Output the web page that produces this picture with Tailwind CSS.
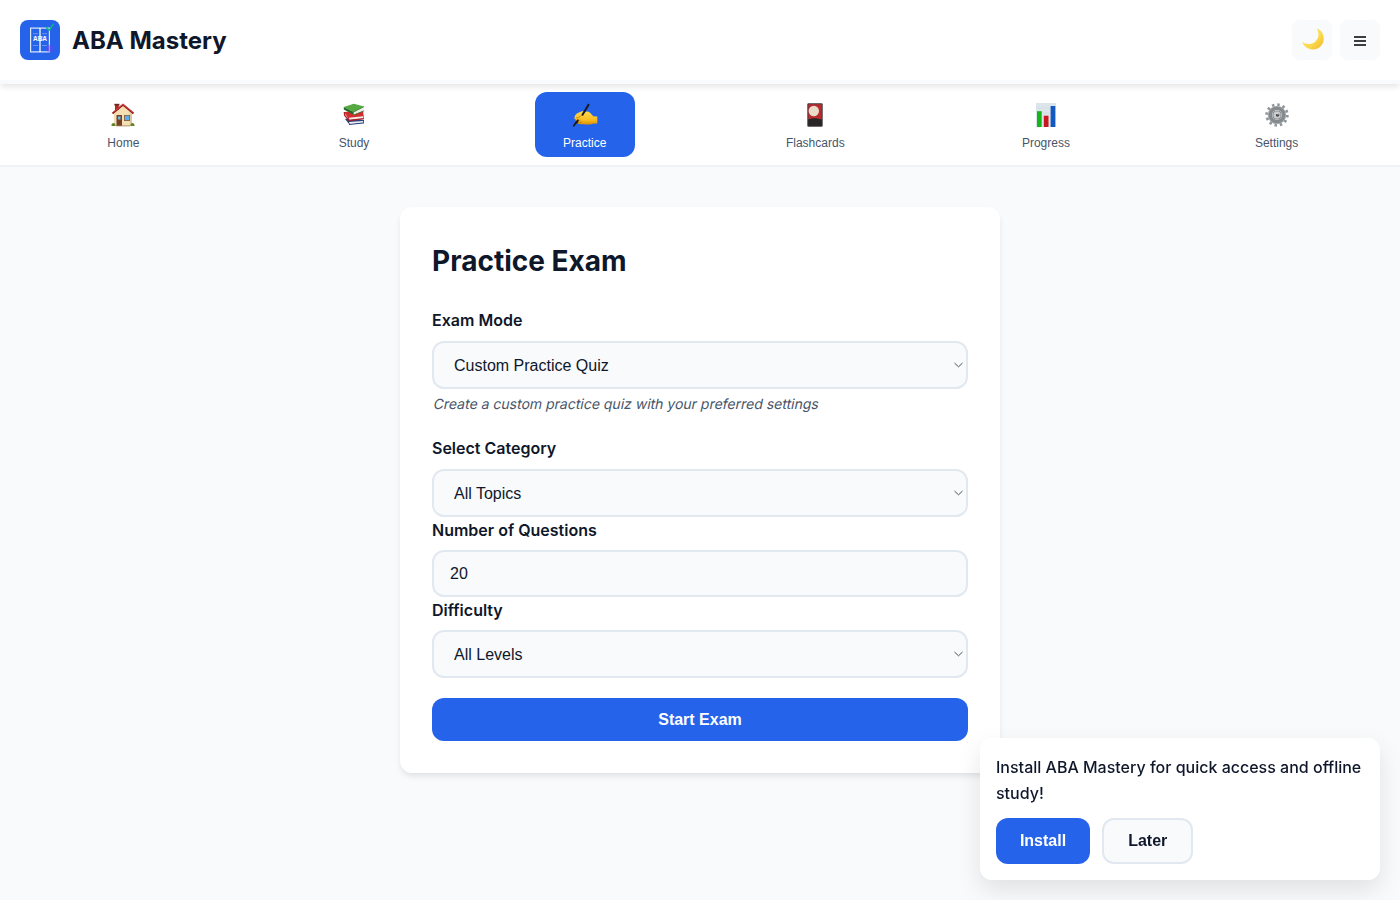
<!DOCTYPE html>
<html lang="en">
<head>
<meta charset="utf-8">
<title>ABA Mastery</title>
<script src="https://cdn.jsdelivr.net/npm/@tailwindcss/browser@4"></script>
</head>
<body class="h-screen overflow-hidden bg-[#f8fafc] font-['Inter',sans-serif] text-base leading-[1.6] text-[#0f172a]">
<header class="relative z-10 shadow-[0_4px_6px_-1px_rgba(0,0,0,0.1)]">
  <div class="flex h-20 items-center justify-between bg-white px-5">
    <div class="flex items-center gap-3">
      <svg class="size-10 rounded-lg" viewBox="0 0 40 40">
        <rect width="40" height="40" fill="#2563eb"/>
        <g fill="none" stroke="#fff" stroke-opacity=".85" stroke-width="1.2">
          <rect x="10.6" y="8.1" width="18.8" height="23.8"/>
          <path d="M20 8v24" stroke-width="1.5"/>
          <path d="M13 13.7h5M22 13.7h5M13 17h5M22 17h5M13 25.5h5M22 25.5h5" stroke-opacity=".4" stroke-width=".8"/>
        </g>
        <circle cx="30" cy="28.5" r="3.7" fill="#7c3aed" fill-opacity=".45"/>
        <text x="20" y="21.2" text-anchor="middle" font-family="Liberation Sans" font-size="6.5" font-weight="700" fill="#fff">ABA</text>
        <path d="m26.5 7.5 2.7 2.8 4-6" fill="none" stroke="#10b981" stroke-width="1.5" stroke-linecap="round" stroke-linejoin="round"/>
      </svg>
      <h1 class="pt-0.5 text-2xl font-bold leading-[1.6]">ABA Mastery</h1>
    </div>
    <div class="flex gap-2">
      <button class="flex size-10 items-center justify-center rounded-lg bg-[#f8fafc] pb-0.5 pl-0.5" aria-label="Dark mode">
        <svg class="size-6" viewBox="0 0 24 24">
          <defs><linearGradient id="moon" x1="0" y1="0" x2="1" y2="1"><stop offset="0" stop-color="#ffe680"/><stop offset=".6" stop-color="#fbd84b"/><stop offset="1" stop-color="#efb52c"/></linearGradient></defs>
          <path d="M15.500 1.200C21.500 3.400 23.800 9.200 22.300 14.800 20.400 20.700 15 23.500 9.800 22.200 5.500 21.200 2.500 18.500 1.200 14.900c3.400 2.400 9 2.900 12.600 0C18 11.600 18.700 6 15.500 1.200Z" fill="url(#moon)"/>
        </svg>
      </button>
      <button class="flex size-10 items-center justify-center rounded-lg bg-[#f8fafc] pt-0.5" aria-label="Menu">
        <svg class="size-3" viewBox="0 0 12 12"><path d="M0 2h12M0 6h12M0 10h12" stroke="#000" stroke-width="1.7"/></svg>
      </button>
    </div>
  </div>
  <div class="h-1 bg-[#f8fafc]"></div>
</header>
<nav class="flex h-[83px] justify-around border-b-2 border-[#eff2f6] bg-white px-2 pt-2 font-['Liberation_Sans',sans-serif] text-xs text-[#475569]">
  <div class="flex h-[65.4px] w-[100px] flex-col items-center gap-[9px] rounded-xl pt-[11px]">
    <svg class="size-6" viewBox="0 0 24 24">
      <path d="M4 1h3.800v6H4z" fill="#b02a26"/><path d="M3.400.8h5v1.700h-5z" fill="#702320"/>
      <path d="M3 11 12 3l9 8v12H3z" fill="#f3dfb2"/><path d="M18.500 9 21 11v12h-2z" fill="#dfc797"/>
      <path d="M1.500 10.500 12 1.800l10.500 8.700" fill="none" stroke="#9b211e" stroke-width="2"/><path d="M3 8.600 12 1.200l9 7.300" fill="none" stroke="#df4b41" stroke-width=".8"/>
      <path d="M5.500 12h5.500v11H5.500z" fill="#754127"/><path d="M7 13.500h2.500v3H7z" fill="#75bde9"/><path d="M13 12h6v6h-6z" fill="#896347"/><path d="M13.900 12.800h4.300v4.300h-4.300z" fill="#5caee8"/>
      <path d="M.5 23c-.5-4 4.500-4 4 0zM19.500 23c-.5-4 4.500-4 4 0z" fill="#608629"/><path d="M5 22.500h14v.8H5z" fill="#a87e55"/>
    </svg>
    <span class="leading-[14px]">Home</span>
  </div>
  <div class="flex h-[65.4px] w-[100px] flex-col items-center gap-[9px] rounded-xl pt-[11px]">
    <svg class="size-6" viewBox="0 0 24 24">
      <path d="m3 16 4 5 15-1v-3L8 15z" fill="#28437d"/><path d="m7 19 14-1 .5 2L8 21.500z" fill="#eef0f3"/><path d="m7 21.500 15-1.600" stroke="#233c78" fill="none"/>
      <path d="m2 9 5 7.500L22 15l-1-7z" fill="#d42d30"/><path d="m7 14.700 14-1.500.5 2L7.500 17z" fill="#f4eee8"/><path d="m2.300 9 .4 3.500 4.500 5L22 15.700" fill="none" stroke="#ad2029" stroke-width="1.300"/>
      <path d="m1.800 4 10-3.200L22 3.500 11.800 9z" fill="#54a940"/><path d="M1.800 4v2.500L11.700 12V9z" fill="#276c24"/><path d="m11.700 8.900 10-4.400v3.300l-10 4z" fill="#eee"/><path d="m11.700 12 10.500-4.200M11.700 9 22 3.700" stroke="#347c29" fill="none" stroke-width=".8"/>
    </svg>
    <span class="leading-[14px]">Study</span>
  </div>
  <div class="flex h-[65.4px] w-[100px] flex-col items-center gap-[9px] rounded-xl bg-[#2563eb] pt-[11px] text-white">
    <svg class="size-6 overflow-visible" viewBox="0 0 24 24">
      <defs><linearGradient id="hand" x1="0" y1="0" x2="0" y2="1"><stop offset="0" stop-color="#ffda50"/><stop offset=".65" stop-color="#fdbd22"/><stop offset="1" stop-color="#d99008"/></linearGradient></defs>
      <path d="M1.400 15.800c0-2.700 1.100-4.800 3.400-5.700l4.300-1.900c1.700-.7 2.600.7 1.700 2l2.500-1.600c2.900-1 5 2.500 7 4.600l4 .4v7l-4.500.1c-2.800 1-6 1-9 .5-3.800-.2-7.300-.3-7.900-1.800-.4-.8 0-1.400.5-1.600-1-.4-1.200-1.200-.7-1.800-.7 0-1.100 0-1.300-.2Z" fill="url(#hand)"/>
      <path d="M2.900 17.700c2 .4 3.500 0 4.800-.8M4 19.600c2 .3 3.700 0 5-.8M3 14.800c2 .5 4.200-.9 5.600-2.700" fill="none" stroke="#b67610" stroke-width=".7"/>
      <path d="m3.500 19.800 1.300-2.400M9.500 11.700l6-10" stroke="#171a20" stroke-width="2" stroke-linecap="round"/><path d="m.8 22.800 2.700-4" stroke="#171a20" stroke-width="1.700" stroke-linecap="round"/>
    </svg>
    <span class="leading-[14px]">Practice</span>
  </div>
  <div class="flex h-[65.4px] w-[100px] flex-col items-center gap-[9px] rounded-xl pt-[11px]">
    <svg class="size-6" viewBox="0 0 24 24">
      <rect x="4.300" y=".2" width="15.400" height="23.600" rx="1.200" fill="#3e3839"/><path d="M5.300 1.200h13.400v15H5.300z" fill="#b62c31"/><circle cx="10.800" cy="8" r="5.200" fill="#e9dbc8"/><path d="M5.300 17c3-2.500 9-2.500 13.400 0v5.800H5.300z" fill="#272526"/>
    </svg>
    <span class="leading-[14px]">Flashcards</span>
  </div>
  <div class="flex h-[65.4px] w-[100px] flex-col items-center gap-[9px] rounded-xl pt-[11px]">
    <svg class="size-6" viewBox="0 0 24 24">
      <path d="M2 0h20v24H2z" fill="#dce5ec"/><path d="M2 5h20M2 10h20M2 15h20M2 20h20" stroke="#cbd6df" stroke-width=".5"/><path d="M3 8.200h4.700V24H3z" fill="#16b51c"/><path d="M9.800 12.700h4.700V24H9.800z" fill="#c9161f"/><path d="M16.600 3h4.700v21h-4.700z" fill="#1459bd"/>
    </svg>
    <span class="leading-[14px]">Progress</span>
  </div>
  <div class="flex h-[65.4px] w-[100px] flex-col items-center gap-[9px] rounded-xl pt-[11px]">
    <svg class="size-6" viewBox="0 0 24 24">
      <circle cx="12" cy="12" r="10.200" fill="none" stroke="#8f9499" stroke-width="3" stroke-dasharray="2.400 2.940"/>
      <circle cx="12" cy="12" r="7" fill="none" stroke="#858a8e" stroke-width="4.200"/><circle cx="12" cy="12" r="8.800" fill="none" stroke="#b6babd" stroke-width=".7"/>
      <circle cx="12" cy="12" r="4.100" fill="#c8cccf" stroke="#696e72" stroke-width=".8"/><circle cx="12.600" cy="12" r="1.800" fill="#4b4e52"/><path d="M11.300 10.500c1-.8 2 0 1.800 1" stroke="#fff" fill="none"/>
    </svg>
    <span class="leading-[14px]">Settings</span>
  </div>
</nav>
<main class="px-5 pt-[39.6px]">
  <section class="mx-auto h-[566.4px] w-[600px] rounded-xl bg-white px-8 pt-8 shadow-[0_4px_6px_-1px_rgba(0,0,0,0.1)]">
    <h2 class="mb-[25px] text-[28px] font-bold leading-[1.6]">Practice Exam</h2>
    <label class="mb-[7px] block font-semibold">Exam Mode</label>
    <div class="relative">
      <select class="block h-12 w-full appearance-none rounded-xl border-2 border-[#e2e8f0] bg-[#f8fafc] px-5 pt-0.5 font-['Liberation_Sans',sans-serif]"><option>Custom Practice Quiz</option></select>
      <svg class="pointer-events-none absolute right-[5px] top-[21px] h-[6px] w-[9px]" viewBox="0 0 9 6"><path d="m.5 1 4 3.800 4-3.800" fill="none" stroke="#4b5060"/></svg>
    </div>
    <p class="ml-[0.5px] mt-1 origin-[0_15px] -skew-x-12 text-sm leading-[1.6] text-[#475569]">Create a custom practice quiz with your preferred settings</p>
    <label class="mb-[7px] mt-[21px] block font-semibold">Select Category</label>
    <div class="relative">
      <select class="block h-12 w-full appearance-none rounded-xl border-2 border-[#e2e8f0] bg-[#f8fafc] px-5 pt-0.5 font-['Liberation_Sans',sans-serif]"><option>All Topics</option></select>
      <svg class="pointer-events-none absolute right-[5px] top-[21px] h-[6px] w-[9px]" viewBox="0 0 9 6"><path d="m.5 1 4 3.800 4-3.800" fill="none" stroke="#4b5060"/></svg>
    </div>
    <label class="mb-[7px] mt-[0.8px] block font-semibold">Number of Questions</label>
    <input class="block h-[46.4px] w-full rounded-xl border-2 border-[#e2e8f0] bg-[#f8fafc] px-4 font-['Liberation_Sans',sans-serif]" type="text" value="20">
    <label class="mb-[7px] mt-px block font-semibold">Difficulty</label>
    <div class="relative">
      <select class="block h-12 w-full appearance-none rounded-xl border-2 border-[#e2e8f0] bg-[#f8fafc] px-5 font-['Liberation_Sans',sans-serif]"><option>All Levels</option></select>
      <svg class="pointer-events-none absolute right-[5px] top-[21px] h-[6px] w-[9px]" viewBox="0 0 9 6"><path d="m.5 1 4 3.800 4-3.800" fill="none" stroke="#4b5060"/></svg>
    </div>
    <button class="mt-5 block h-[42.4px] w-full rounded-xl bg-[#2563eb] font-['Liberation_Sans',sans-serif] font-bold leading-normal text-white">Start Exam</button>
  </section>
</main>
<aside class="fixed bottom-5 right-5 z-20 w-[400px] rounded-xl bg-white px-4 pb-4 pt-[17px] shadow-[0_10px_25px_rgba(0,0,0,0.1)]">
  <p class="mb-[11px] font-medium leading-[1.6]">Install ABA Mastery for quick access and offline study!</p>
  <div class="flex gap-3 font-['Liberation_Sans',sans-serif] font-bold leading-normal">
    <button class="h-[46.4px] w-[94px] rounded-xl bg-[#2563eb] text-white">Install</button>
    <button class="h-[46.4px] w-[91.4px] rounded-xl border-2 border-[#e2e8f0] bg-[#f8fafc]">Later</button>
  </div>
</aside>
</body>
</html>
